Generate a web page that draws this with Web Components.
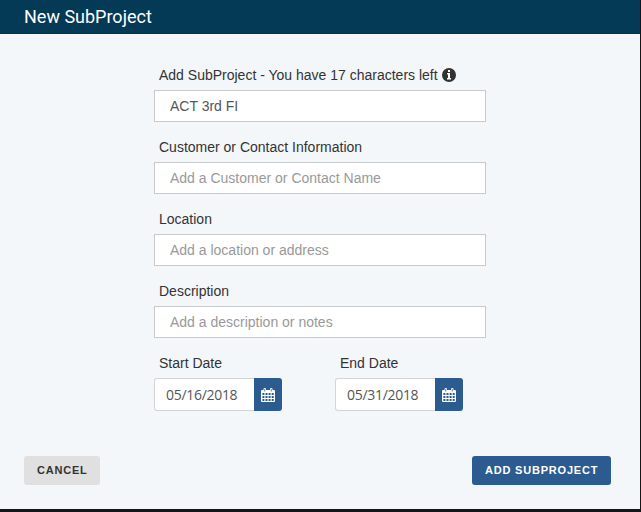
<!DOCTYPE html>
<html lang="en">
<head>
<meta charset="utf-8">
<title>New SubProject</title>
<style>
  :root {
    --navy: #043a56;
    --blue: #2c5b8f;
    --page: #f3f7fa;
  }

  body {
    margin: 0;
    height: 512px;
    overflow: hidden;
    background: #151517;
    font-family: "Liberation Sans", Arial, sans-serif;
    font-size: 14px;
    color: #333;
  }
</style>
</head>
<body>
<sub-project-dialog heading="New SubProject">
  <text-field label="Add SubProject - You have 17 characters left" value="ACT 3rd FI">
    <info-icon slot="hint"></info-icon>
  </text-field>
  <text-field label="Customer or Contact Information" placeholder="Add a Customer or Contact Name"></text-field>
  <text-field label="Location" placeholder="Add a location or address"></text-field>
  <text-field label="Description" placeholder="Add a description or notes"></text-field>
  <date-field slot="dates" label="Start Date" value="05/16/2018"></date-field>
  <date-field slot="dates" label="End Date" value="05/31/2018"></date-field>
  <action-button slot="actions">CANCEL</action-button>
  <action-button slot="actions" primary>ADD SUBPROJECT</action-button>
</sub-project-dialog>

<script>
class SubProjectDialog extends HTMLElement {
  constructor() {
    super();
    this.attachShadow({ mode: 'open' });
  }

  connectedCallback() {
    this.shadowRoot.innerHTML = `
      <style>
        :host {
          display: flex;
          flex-direction: column;
          width: 640px;
          height: 509px;
          background: var(--page);
        }

        header {
          box-sizing: border-box;
          height: 34px;
          padding-left: 24px;
          background: var(--navy);
          border-bottom: 1px solid #03324c;
          color: #fff;
          font: 18px/33px Roboto, sans-serif;
        }

        main {
          box-sizing: border-box;
          width: 332px;
          margin: 32px 0 0 154px;
        }

        .dates { display: flex; gap: 53px; }

        footer {
          display: flex;
          justify-content: space-between;
          margin: auto 29px 24px 24px;
        }
      </style>

      <header>${this.getAttribute('heading')}</header>
      <main>
        <slot></slot>
        <div class="dates"><slot name="dates"></slot></div>
      </main>
      <footer><slot name="actions"></slot></footer>
    `;
  }
}

class TextField extends HTMLElement {
  constructor() {
    super();
    this.attachShadow({ mode: 'open' });
  }

  connectedCallback() {
    this.shadowRoot.innerHTML = `
      <style>
        :host { display: block; height: 72px; }

        label {
          display: flex;
          align-items: center;
          gap: 4px;
          height: 18px;
          margin-bottom: 6px;
          padding-left: 5px;
          white-space: nowrap;
        }

        input {
          display: block;
          box-sizing: border-box;
          width: 100%;
          height: 32px;
          padding: 0 15px;
          border: 1px solid #c8cacc;
          background: #fff;
          color: #555;
          font: inherit;
          outline: none;
        }

        input::placeholder { color: #999; opacity: 1; }
      </style>

      <label><span>${this.getAttribute('label')}</span><slot name="hint"></slot></label>
      <input type="text" value="${this.getAttribute('value') || ''}" placeholder="${this.getAttribute('placeholder') || ''}">
    `;
  }
}

class DateField extends HTMLElement {
  constructor() {
    super();
    this.attachShadow({ mode: 'open' });
  }

  connectedCallback() {
    this.shadowRoot.innerHTML = `
      <style>
        :host { display: block; width: 128px; }

        label {
          display: block;
          height: 18px;
          margin-bottom: 6px;
          padding-left: 5px;
          line-height: 18px;
        }

        .group { display: flex; height: 33px; }

        input {
          box-sizing: border-box;
          width: 100px;
          padding: 0 0 0 11px;
          border: 1px solid #d3d6d9;
          border-right: 0;
          border-radius: 3px 0 0 3px;
          background: #fff;
          color: #555;
          font: 14px "Open Sans", sans-serif;
          letter-spacing: -0.3px;
          outline: none;
        }

        button {
          display: flex;
          align-items: center;
          justify-content: center;
          width: 28px;
          padding: 0;
          border: 0;
          border-radius: 0 3px 3px 0;
          background: var(--blue);
        }

        svg { width: 14px; height: 14px; }
      </style>

      <label>${this.getAttribute('label')}</label>
      <div class="group">
        <input type="text" value="${this.getAttribute('value')}">
        <button type="button" aria-label="Open calendar">
          <svg viewBox="0 0 14 14">
            <path fill="#fff" d="M1 2h1.500V1q0-1 1.250-1T5 1v1h4V1q0-1 1.250-1T11.500 1v1H13q1 0 1 1v10q0 1-1 1H1q-1 0-1-1V3q0-1 1-1z"/>
            <path stroke="#2c5b8f" stroke-width=".8" d="M3.750 1v2.500M10.250 1v2.500"/>
            <path stroke="#2c5b8f" stroke-width="2" stroke-dasharray="2 1.100" d="M1.400 6h11.300M1.400 9h11.300M1.400 12h11.300"/>
          </svg>
        </button>
      </div>
    `;
  }
}

class ActionButton extends HTMLElement {
  constructor() {
    super();
    this.attachShadow({ mode: 'open' });
  }

  connectedCallback() {
    this.shadowRoot.innerHTML = `
      <style>
        :host { display: block; }

        button {
          display: block;
          box-sizing: border-box;
          width: 76px;
          height: 29px;
          padding: 0 0 2px 13px;
          border: 0;
          border-radius: 3px;
          background: #e0e0e0;
          color: #333;
          font: bold 11px "Liberation Sans", Arial, sans-serif;
          letter-spacing: 0.8px;
          text-align: left;
          white-space: nowrap;
        }

        :host([primary]) button {
          width: 139px;
          background: var(--blue);
          color: #fff;
        }
      </style>

      <button type="button"><slot></slot></button>
    `;
  }
}

class InfoIcon extends HTMLElement {
  constructor() {
    super();
    this.attachShadow({ mode: 'open' });
  }

  connectedCallback() {
    this.shadowRoot.innerHTML = `
      <style>
        :host { display: block; width: 14px; height: 14px; }
        svg { display: block; }
      </style>

      <svg width="14" height="14" viewBox="0 0 14 14">
        <circle cx="7" cy="7" r="7" fill="#333"/>
        <path fill="#fff" d="M6 2h2v2H6zM5 5h3v5h1v1.500H5V10h1V6.500H5z"/>
      </svg>
    `;
  }
}

customElements.define('sub-project-dialog', SubProjectDialog);
customElements.define('text-field', TextField);
customElements.define('date-field', DateField);
customElements.define('action-button', ActionButton);
customElements.define('info-icon', InfoIcon);
</script>
</body>
</html>
